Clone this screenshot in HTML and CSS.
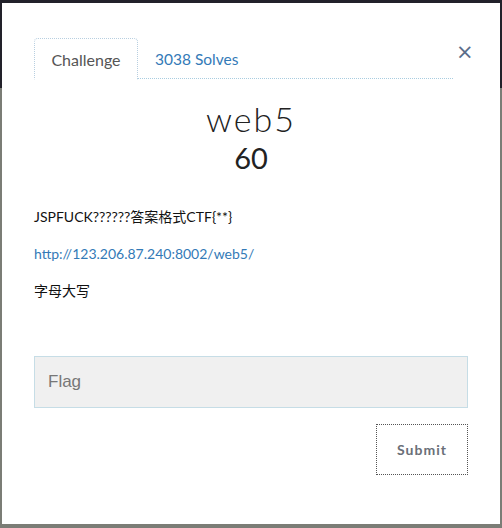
FILE: index.html
```html
<!DOCTYPE html>
<html>
<head>
<meta charset="utf-8">
<link rel="stylesheet" href="styles.css">
</head>
<body>
<div class="backdrop">
  <div class="modal">
    <div class="tabs-row">
      <ul class="tabs">
        <li class="tab active">Challenge</li>
        <li class="tab link">3038 Solves</li>
      </ul>
      <button class="close">&times;</button>
    </div>
    <h2 class="title">web5</h2>
    <h3 class="value">60</h3>
    <div class="desc">
      <p>JSPFUCK??????答案格式CTF{**}</p>
      <p><a href="#">http://123.206.87.240:8002/web5/</a></p>
      <p>字母大写</p>
    </div>
    <div class="form">
      <input class="flag" type="text" placeholder="Flag">
      <div class="actions"><button class="submit">Submit</button></div>
    </div>
  </div>
</div>
</body>
</html>
```
FILE: styles.css
```css
html, body { margin: 0; padding: 0; }
body {
  width: 502px; height: 528px; overflow: hidden;
  background: linear-gradient(#22212a 0, #22212a 88px, #7b7d76 88px);
  font-family: Lato, "Noto Sans CJK SC", sans-serif;
}
.backdrop { padding: 3px 2px 0 2px; height: 528px; box-sizing: border-box; }
.modal {
  background: #fff; height: 521px; box-sizing: border-box;
  padding: 35px 32px 0 32px;
}
.tabs-row { display: flex; align-items: flex-start; }
.tabs {
  list-style: none; margin: 0; padding: 0; display: flex; flex: 0 0 419px;
  border-bottom: 1px dotted #a9cde0; height: 41px; box-sizing: border-box;
}
.tab { font-size: 15.5px; padding: 0 17px; line-height: 44px; height: 41px; box-sizing: border-box; }
.tab.active {
  color: #555; border: 1px dotted #b8cfe0; border-bottom: 1px solid #fff;
  border-radius: 4px 4px 0 0; height: 42px; background: #fff; width: 104px; text-align: center; padding: 0;
  line-height: 42px; font-size: 16px;
}
.tab.link { color: #337ab7; padding-left: 17px; line-height: 42px; }
.close {
  border: 0; background: none; padding: 0; margin: 3px 0 0 3px;
  font-family: "DejaVu Sans", sans-serif; font-size: 21px; line-height: 22px; color: #5a6d8a; font-weight: normal;
}
.title {
  margin: 22px 0 0; text-align: center; font-weight: 300; font-size: 34px; line-height: 36px;
  color: #222; letter-spacing: 2px;
}
.value {
  margin: 3px 0 0; text-align: center; font-weight: 400; font-size: 29px; line-height: 36px; color: #222;
}
.desc { margin-top: 31px; font-size: 14px; color: #111; }
.desc p { margin: 0 0 17px; line-height: 20px; }
.desc a { color: #337ab7; text-decoration: none; }
.form { margin-top: 55px; }
.flag {
  display: block; width: 100%; box-sizing: border-box; height: 52px;
  background: #f0f0f0; border: 1px solid #c6dde6; padding: 0 13px;
  font-family: "Liberation Sans", sans-serif; font-size: 17px; color: #555; outline: none;
}
.flag::placeholder { color: #777; }
.actions { display: flex; justify-content: flex-end; margin-top: 16px; }
.submit {
  width: 92px; height: 51px; background: #fff; border: 1px dotted #555;
  font-family: Lato, sans-serif; font-weight: bold; font-size: 14px; color: #6a6f78; letter-spacing: 1px;
}
```
